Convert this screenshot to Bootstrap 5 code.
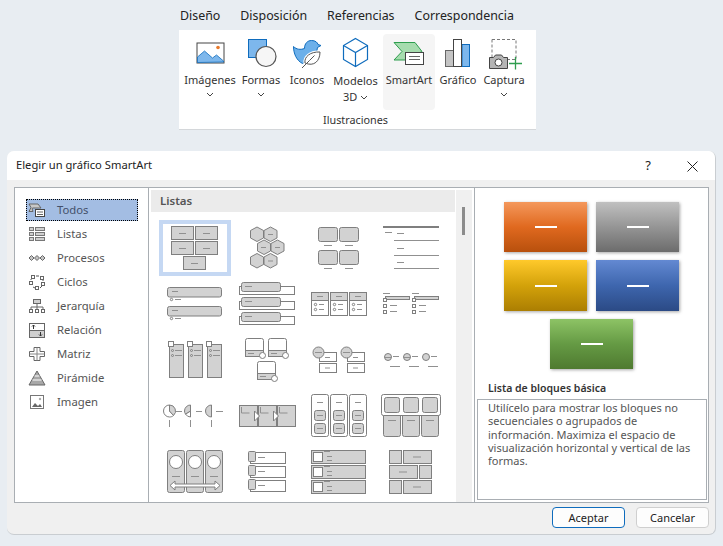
<!doctype html>
<html lang="es">
<head>
<meta charset="utf-8">
<title>Elegir un gráfico SmartArt</title>
<link href="https://cdn.jsdelivr.net/npm/bootstrap@5.3.0/dist/css/bootstrap.min.css" rel="stylesheet">
<style>
html,body{height:100%}
body{background:#e8edf2;font-family:"Noto Sans","Open Sans","Liberation Sans",sans-serif;font-size:12px;color:#262626;overflow:hidden}
.stage{width:723px;height:546px;overflow:hidden}
.rtabs{height:30px;padding-left:180px;gap:20px;font-size:12.4px;line-height:31px;color:#222}
.rpanel{margin-left:179px;width:357px;height:100px;background:#fff;border-bottom:1px solid #d4d7da;padding:4px 0 0 4px}
.rrow{gap:1px}
.rbtn{height:76px;font-size:11px;line-height:16px;color:#333;border-radius:4px}
.rbtn svg{display:block;margin:2px auto 0;flex:none}
.rlab{white-space:nowrap}
.rl1{margin-top:1px}
.rbtn svg.chev{display:block;margin:4px auto 0}
.rbtn svg.chevi{display:inline;margin:0 0 1px}
.w54{width:54px}.w46{width:46px}.w44{width:44px}.w51{width:51px}.w52{width:52px;background:#f5f5f5;margin-left:1px}
.rgroup{font-size:10.8px;color:#333;line-height:14px;margin-top:3px;padding-right:8px}
.dlg{margin:21px 0 0 7px;width:709px;height:384px;background:#f0f0f0;border-radius:7px;overflow:hidden;border-right:1px solid #c9cdd1;border-bottom:1px solid #c9cdd1}
.dtitle{height:29px;background:#fff;padding:0 1px 0 9px;font-size:11.2px;line-height:28px;color:#222}
.dctl{width:44px;text-align:center;font-size:13px}
.dbody{margin:7px 0 0 7px;width:695px;height:316px;background:#fff;border:1px solid #a9aeb3}
.lpane{width:134px;padding:11px 0 0 11px;border-right:1px solid #a9aeb3}
.litem{height:24px;width:112px;padding-left:2px;gap:11px;font-size:11.3px;color:#555;line-height:22px}
.litem svg{flex:none}
.lsel{background:#a3bde3;border:1px dotted #000;padding-left:1px;height:22px;margin-bottom:1px;color:#44506a}
.mpane{width:326px;height:314px;border-right:1px solid #a9aeb3;overflow:hidden}
.mlist{width:307px;height:314px;padding:2px 0 0 2px;overflow:hidden}
.mhead{height:22px;background:#ebebeb;width:304px;padding-left:9px;font-weight:600;font-size:11.5px;line-height:21px;color:#555}
.tgrid{grid-template-columns:repeat(4,72px);grid-auto-rows:56px;margin:8px 0 0 8px}
.tcell{width:72px;height:56px;display:block}
.th rect,.th circle,.th path,.th polygon{fill:#d2d2d2;stroke:#7f7f7f;stroke-width:1}
.th .w{fill:#fff}.th .n{fill:none}.th .k{stroke-width:2}.th .m{fill:none;stroke:#909090}
.th .sel{fill:#fff;stroke:#c5d8f3;stroke-width:4}
.sbar{width:16px;height:312px;margin-top:2px;background:#f0f0f0;padding:17px 0 0 6px}
.sthumb{width:3px;height:28px;background:#8c8c8c}
.rpane{width:233px;padding:14px 0 0 2px}
.swrow{gap:9px;padding-left:27px;margin-bottom:8px}
.sw{width:83px;height:50px;box-shadow:1px 1px 3px rgba(0,0,0,.35)}
.swy{height:51px}
.sw i{display:block;width:22px;height:2px;background:#fff}
.sor{background:linear-gradient(#f4985c,#e0691f 50%,#b8500d)}
.sgr{background:linear-gradient(#c0c0c0,#959595 50%,#6c6c6c)}
.sye{background:linear-gradient(#ffc92b,#d3a20a 50%,#ab7e02)}
.sbl{background:linear-gradient(#6389d2,#3e66ae 50%,#2b4a85)}
.sgn{background:linear-gradient(#8dc365,#659a44 50%,#4f7a30)}
.swc{padding-left:73px}
.ptitle{font-weight:600;font-size:10.5px;line-height:14px;color:#333;margin:12px 0 4px 11px}
.pdesc{width:230px;height:101px;border:1px solid #a9aeb3;padding:1px 10px;font-size:11px;line-height:13.3px;color:#555}
.dfoot{margin-top:4px;padding-right:6px;gap:11px}
.dbtn{width:73px;height:21px;padding:0;font-size:11px;line-height:19px;color:#222;background:#fdfdfd;border:1px solid #cfcfcf;border-radius:4px}
.dbtn.pri{border:1.5px solid #0f6cbd}
</style>
</head>
<body>
<div class="stage">
 <div class="rtabs d-flex"><span>Diseño</span><span>Disposición</span><span>Referencias</span><span>Correspondencia</span></div>
 <div class="rpanel">
  <div class="d-flex rrow">
   <div class="rbtn w54 text-center">
    <svg width="40" height="36" viewBox="0 0 40 36"><rect x="7" y="7" width="27" height="20" fill="#fff" stroke="#444"/><path d="M7.500 26.500V21l7-6 8 7 4-3 7 6v1z" fill="#7db7ec" stroke="#0f6cbd" stroke-width=".8"/><circle cx="28" cy="11.500" r="1.800" fill="#e8792b"/></svg>
    <div class="rlab">Imágenes</div>
    <svg class="chev" width="8" height="5" viewBox="0 0 8 5"><path d="M1 1l3 3 3-3" fill="none" stroke="#444"/></svg>
   </div>
   <div class="rbtn w46 text-center">
    <svg width="40" height="36" viewBox="0 0 40 36"><rect x="7.500" y="3.500" width="18" height="18" fill="#7db7ec" stroke="#0f6cbd"/><circle cx="25" cy="20.500" r="10" fill="#f6f6f6" stroke="#555" stroke-width="1.200"/></svg>
    <div class="rlab">Formas</div>
    <svg class="chev" width="8" height="5" viewBox="0 0 8 5"><path d="M1 1l3 3 3-3" fill="none" stroke="#444"/></svg>
   </div>
   <div class="rbtn w44 text-center">
    <svg width="40" height="36" viewBox="0 0 40 36"><path d="M6.500 10.500c3 3 7 3.500 11 2 0-5 3-8 7-8s6 2 6.500 4l3 1-3.500 2c-.5 4-2 7-4 10l-11 6c-6-3-9-10-9-17z" fill="#6cb0ea" stroke="#0f6cbd"/><path d="M14 32.500l8-8" stroke="#fff" stroke-width="3"/><path d="M18 27c-1-6 5-11.500 15-11 0 9-6 15-15 11z" fill="#fff" stroke="#fff" stroke-width="3"/><path d="M15 32l7.500-7.500M18 27c-1-6 5-11.500 15-11 0 9-6 15-15 11zM22.500 24.500l5-5" fill="#fff" stroke="#555"/></svg>
    <div class="rlab">Iconos</div>
   </div>
   <div class="rbtn w51 text-center">
    <svg width="40" height="36" viewBox="0 0 40 36"><path d="M19.500 2.500l12 7v14l-12 7-12-7v-14z" fill="#fff" stroke="#0f6cbd" stroke-width="1.200"/><path d="M7.500 9.500l12 7 12-7M19.500 16.500v14" fill="none" stroke="#0f6cbd" stroke-width="1.200"/></svg>
    <div class="rlab rl1">Modelos</div>
    <div>3D <svg class="chevi" width="8" height="5" viewBox="0 0 8 5"><path d="M1 1l3 3 3-3" fill="none" stroke="#444"/></svg></div>
   </div>
   <div class="rbtn w52 text-center">
    <svg width="40" height="36" viewBox="0 0 40 36"><path d="M5 6.500h21l7 9-17 8.500H5l8-8.500z" fill="#a6dcae" stroke="#2f9e4f"/><rect x="16.500" y="16.500" width="18" height="12" fill="#fff" stroke="#444"/><path d="M20 20.500h11M20 23.500h11" stroke="#666"/></svg>
    <div class="rlab">SmartArt</div>
   </div>
   <div class="rbtn w44 text-center">
    <svg width="40" height="36" viewBox="0 0 40 36"><rect x="7.500" y="14.500" width="8" height="16" fill="#c4c4c4" stroke="#666"/><rect x="24" y="8.500" width="7.500" height="22" fill="#7db7ec" stroke="#0f6cbd"/><rect x="15.500" y="3.500" width="8" height="27" fill="#fff" stroke="#444"/></svg>
    <div class="rlab">Gráfico</div>
   </div>
   <div class="rbtn w46 text-center">
    <svg width="40" height="36" viewBox="0 0 40 36"><rect x="8" y="3.500" width="24" height="20" fill="none" stroke="#777" stroke-dasharray="3 2"/><path d="M5.500 21.500h4l2-2.500h6l2 2.500h4v11h-18z" fill="#b5b5b5" stroke="#444"/><circle cx="14.500" cy="26.500" r="3.500" fill="#fff" stroke="#444"/><path d="M31.500 21v12.500M25 27.500h13" stroke="#2f9e4f" stroke-width="1.300"/></svg>
    <div class="rlab">Captura</div>
    <svg class="chev" width="8" height="5" viewBox="0 0 8 5"><path d="M1 1l3 3 3-3" fill="none" stroke="#444"/></svg>
   </div>
  </div>
  <div class="rgroup text-center">Ilustraciones</div>
 </div>

 <div class="dlg">
  <div class="dtitle d-flex justify-content-between"><span>Elegir un gráfico SmartArt</span>
   <span class="d-flex"><span class="dctl">?</span><span class="dctl"><svg width="11" height="11" viewBox="0 0 11 11"><path d="M.5.5l10 10M10.500.5l-10 10" stroke="#222"/></svg></span></span></div>
  <div class="dbody d-flex">
   <div class="lpane">
    <div class="litem lsel d-flex align-items-center"><svg width="18" height="16" viewBox="0 0 18 16"><path d="M1 2h9l3 4H5l-1 .500 1 3H1l2-4z" fill="#c8c8c8" stroke="#666"/><rect x="7.500" y="7.500" width="9" height="7" fill="#fff" stroke="#444"/><path d="M9 10h6M9 12.500h6" stroke="#666"/></svg><span>Todos</span></div>
    <div class="litem d-flex align-items-center"><svg width="18" height="16" viewBox="0 0 18 16"><g fill="#cfcfcf" stroke="#777"><rect x="1.500" y="1.500" width="4" height="3"/><rect x="7.500" y="1.500" width="9" height="3"/><rect x="1.500" y="6.500" width="4" height="3"/><rect x="7.500" y="6.500" width="9" height="3"/><rect x="1.500" y="11.500" width="4" height="3"/><rect x="7.500" y="11.500" width="9" height="3"/></g></svg><span>Listas</span></div>
    <div class="litem d-flex align-items-center"><svg width="18" height="16" viewBox="0 0 18 16"><g fill="#c4c4c4" stroke="#666"><path d="M1 8l2.500-2.500L6 8l-2.500 2.500zM6.500 8L9 5.500 11.500 8 9 10.500zM12 8l2.500-2.500L17 8l-2.500 2.500z"/></g></svg><span>Procesos</span></div>
    <div class="litem d-flex align-items-center"><svg width="18" height="16" viewBox="0 0 18 16"><g fill="#fff" stroke="#666"><rect x="3.500" y="1.500" width="3" height="3"/><rect x="12.500" y="2.500" width="3" height="3"/><rect x="1.500" y="7.500" width="3" height="3"/><rect x="13.500" y="8.500" width="3" height="3"/><rect x="7.500" y="12.500" width="3" height="3"/></g><path d="M8 2h3M3 6V5M15 7V6M5 13l2 1M12 14l2-2" stroke="#555"/></svg><span>Ciclos</span></div>
    <div class="litem d-flex align-items-center"><svg width="18" height="16" viewBox="0 0 18 16"><rect x="5.500" y="1.500" width="7" height="4" fill="#cfcfcf" stroke="#666"/><path d="M9 6v3M3 12V9h12v3M9 9v3" fill="none" stroke="#666"/><g fill="#fff" stroke="#666"><rect x="1.500" y="11.500" width="3" height="3"/><rect x="7.500" y="11.500" width="3" height="3"/><rect x="13.500" y="11.500" width="3" height="3"/></g></svg><span>Jerarquía</span></div>
    <div class="litem d-flex align-items-center"><svg width="18" height="16" viewBox="0 0 18 16"><rect x="1.500" y="1.500" width="15" height="14" fill="#fff" stroke="#666"/><rect x="1.500" y="8.500" width="15" height="7" fill="#cfcfcf" stroke="#666"/><path d="M5.500 7V3M4 4.500l1.500-1.500L7 4.500M12.500 10v4M11 12.500l1.500 1.500 1.500-1.500" fill="none" stroke="#333"/></svg><span>Relación</span></div>
    <div class="litem d-flex align-items-center"><svg width="18" height="16" viewBox="0 0 18 16"><path d="M6 1.500h6v4h4.500v5H12v4H6v-4H1.500v-5H6z" fill="#fff" stroke="#666" stroke-linejoin="round"/><path d="M1.500 8h15M9 1.500v13" stroke="#888"/></svg><span>Matriz</span></div>
    <div class="litem d-flex align-items-center"><svg width="18" height="16" viewBox="0 0 18 16"><path d="M9 1l8 14H1z" fill="#a8a8a8" stroke="#666"/><path d="M6.500 6h5M4.500 10h9" stroke="#fff"/></svg><span>Pirámide</span></div>
    <div class="litem d-flex align-items-center"><svg width="18" height="16" viewBox="0 0 18 16"><rect x="2.500" y="1.500" width="13" height="13" fill="#fff" stroke="#777"/><path d="M4 13l3-4 3 3 2-2 2 3z" fill="#666"/><circle cx="12" cy="5" r="1.200" fill="#aaa"/></svg><span>Imagen</span></div>
   </div>

   <div class="mpane d-flex">
    <div class="mlist">
     <div class="mhead">Listas</div>
     <div class="tgrid d-grid">
      <!-- fila 1 -->
      <svg class="tcell th" viewBox="0 0 72 56"><rect class="sel" x="2" y="2" width="68" height="52"/><rect x="12.500" y="6.500" width="22" height="13"/><rect x="36.500" y="6.500" width="22" height="13"/><rect x="12.500" y="21.500" width="22" height="13"/><rect x="36.500" y="21.500" width="22" height="13"/><rect x="24.500" y="36.500" width="22" height="13"/><path class="m" d="M20 13.500h7M44 13.500h7M20 28.500h7M44 28.500h7M32 43.500h7"/></svg>
      <svg class="tcell th" viewBox="0 0 72 56"><polygon points="26,7 32.500,10.500 32.500,18 26,21.500 19.500,18 19.500,10.500"/><polygon points="39.500,7 46,10.500 46,18 39.500,21.500 33,18 33,10.500"/><polygon points="33,20 39.500,23.500 39.500,31 33,34.500 26.500,31 26.500,23.500"/><polygon points="46.500,20 53,23.500 53,31 46.500,34.500 40,31 40,23.500"/><polygon points="26,33.500 32.500,37 32.500,44.500 26,48 19.500,44.500 19.500,37"/><polygon points="39.500,33.500 46,37 46,44.500 39.500,48 33,44.500 33,37"/><path class="m" d="M37 14.500h5M30 27.500h5M44 27.500h5M37 41h5"/></svg>
      <svg class="tcell th" viewBox="0 0 72 56"><rect x="15.500" y="7.500" width="19" height="14" rx="2"/><rect x="36.500" y="7.500" width="19" height="14" rx="2"/><rect x="15.500" y="30.500" width="19" height="14" rx="2"/><rect x="36.500" y="30.500" width="19" height="14" rx="2"/><path class="m" d="M21 25.500h8M42 25.500h8M21 48.500h8M42 48.500h8"/></svg>
      <svg class="tcell th" viewBox="0 0 72 56"><path class="n k" d="M8 7h56"/><path class="m" d="M10 12.500h7M22 13.500h7M19 20.500h45M22 28.500h7M19 35.500h45M22 42.500h7M19 48.500h45"/></svg>
      <!-- fila 2 -->
      <svg class="tcell th" viewBox="0 0 72 56"><rect x="8.500" y="11.500" width="54" height="9.500" rx="2"/><rect x="8.500" y="30.500" width="54" height="9.500" rx="2"/><circle cx="12.500" cy="23.500" r="1.200" class="w"/><circle cx="12.500" cy="42.500" r="1.200" class="w"/><path class="m" d="M13 15.500h6M16 23.500h6M13 34.500h6M16 42.500h6"/></svg>
      <svg class="tcell th" viewBox="0 0 72 56"><rect class="w" x="8.500" y="10.500" width="55" height="8"/><rect x="10.500" y="6.500" width="39" height="9" rx="2"/><rect class="w" x="8.500" y="25.500" width="55" height="8"/><rect x="10.500" y="21.500" width="39" height="9" rx="2"/><rect class="w" x="8.500" y="40.500" width="55" height="8"/><rect x="10.500" y="36.500" width="39" height="9" rx="2"/><path class="m" d="M14 10.500h7M14 25.500h7M14 40.500h7"/></svg>
      <svg class="tcell th" viewBox="0 0 72 56"><rect class="w" x="8.500" y="16.500" width="17" height="23"/><rect class="w" x="27.500" y="16.500" width="17" height="23"/><rect class="w" x="46.500" y="16.500" width="17" height="23"/><rect x="8.500" y="16.500" width="17" height="8"/><rect x="27.500" y="16.500" width="17" height="8"/><rect x="46.500" y="16.500" width="17" height="8"/><path class="m" d="M14 20.500h6M33 20.500h6M52 20.500h6M16 28.500h5M16 33.500h5M35 28.500h5M35 33.500h5M54 28.500h5M54 33.500h5"/><circle class="w" cx="12.500" cy="28.500" r="1.200"/><circle class="w" cx="12.500" cy="33.500" r="1.200"/><circle class="w" cx="31.500" cy="28.500" r="1.200"/><circle class="w" cx="31.500" cy="33.500" r="1.200"/><circle class="w" cx="50.500" cy="28.500" r="1.200"/><circle class="w" cx="50.500" cy="33.500" r="1.200"/></svg>
      <svg class="tcell th" viewBox="0 0 72 56"><rect x="10.500" y="20.500" width="24" height="3"/><rect x="39.500" y="20.500" width="24" height="3"/><path class="m" d="M8 17.500h7M37 17.500h7M15 29.500h7M15 35.500h7M44 29.500h7M44 35.500h7"/><rect class="w" x="8.500" y="22.500" width="3" height="3"/><rect class="w" x="8.500" y="28.500" width="3" height="3"/><rect class="w" x="8.500" y="34.500" width="3" height="3"/><rect class="w" x="37.500" y="22.500" width="3" height="3"/><rect class="w" x="37.500" y="28.500" width="3" height="3"/><rect class="w" x="37.500" y="34.500" width="3" height="3"/></svg>
      <!-- fila 3 -->
      <svg class="tcell th" viewBox="0 0 72 56"><rect x="10.500" y="12.500" width="14" height="33"/><rect x="29.500" y="12.500" width="14" height="33"/><rect x="48.500" y="12.500" width="14" height="33"/><rect class="w" x="9.500" y="9.500" width="5" height="5"/><rect class="w" x="28.500" y="9.500" width="5" height="5"/><rect class="w" x="47.500" y="9.500" width="5" height="5"/><path class="m" d="M16 18.500h7M16 23.500h7M35 18.500h7M35 23.500h7M54 18.500h7M54 23.500h7"/><circle cx="13.500" cy="18.500" r="1"/><circle cx="13.500" cy="23.500" r="1"/><circle cx="32.500" cy="18.500" r="1"/><circle cx="32.500" cy="23.500" r="1"/><circle cx="51.500" cy="18.500" r="1"/><circle cx="51.500" cy="23.500" r="1"/></svg>
      <svg class="tcell th" viewBox="0 0 72 56"><rect class="w" x="14.500" y="6.500" width="18" height="18" rx="2"/><rect x="14.500" y="18.500" width="18" height="6"/><rect class="w" x="37.500" y="6.500" width="18" height="18" rx="2"/><rect x="37.500" y="18.500" width="18" height="6"/><rect class="w" x="26.500" y="29.500" width="18" height="18" rx="2"/><rect x="26.500" y="41.500" width="18" height="6"/><path class="m" d="M17 21.500h6M40 21.500h6M29 44.500h6"/><circle class="w" cx="31.500" cy="23.500" r="3"/><circle class="w" cx="54.500" cy="23.500" r="3"/><circle class="w" cx="43.500" cy="46.500" r="3"/></svg>
      <svg class="tcell th" viewBox="0 0 72 56"><rect class="w" x="16.500" y="20.500" width="17" height="9"/><rect class="w" x="16.500" y="31.500" width="17" height="9"/><rect class="w" x="44.500" y="20.500" width="17" height="9"/><rect class="w" x="44.500" y="31.500" width="17" height="9"/><circle cx="15.500" cy="20.500" r="5.500"/><circle cx="43.500" cy="20.500" r="5.500"/><path class="m" d="M12 20.500h7M40 20.500h7M22 25.500h5M22 36h5M50 25.500h5M50 36h5"/></svg>
      <svg class="tcell th" viewBox="0 0 72 56"><circle cx="13" cy="25" r="3.500"/><circle cx="32" cy="25" r="3.500"/><circle cx="51" cy="25" r="3.500"/><path class="m" d="M10 25.500h6M29 25.500h6M18 24.500h6M37 24.500h6M56 24.500h6M15 34.500h10M34 34.500h10M53 34.500h10"/></svg>
      <!-- fila 4 -->
      <svg class="tcell th" viewBox="0 0 72 56"><path class="w" d="M10.500 17a6 6 0 0 0 0 12c1.500 0 3-.5 4-1.500l-4-4.500z"/><path d="M10.500 17a6 6 0 0 1 4 10.500l-4-4.500z"/><path class="w" d="M31.500 17v12a6 6 0 0 1-5-3l5-3z"/><path d="M31.500 17a6 6 0 0 0-6 6c0 1 .2 2 1 3l5-3z"/><path d="M52.500 17a6 6 0 0 0 0 12z"/><path class="m" d="M17 23.500h6M37 23.500h6M57 23.500h7M10.500 32v7M31.500 32v7M52.500 32v7"/></svg>
      <svg class="tcell th" viewBox="0 0 72 56"><rect x="8.500" y="17.500" width="18" height="21"/><rect x="27.500" y="17.500" width="18" height="21"/><rect x="46.500" y="17.500" width="18" height="21"/><path class="w" d="M23.500 23l5 5-5 5zM42.500 23l5 5-5 5z"/><path class="m" d="M10.500 19v6h8M29.500 19v6h8M48.500 19v6h8"/></svg>
      <svg class="tcell th" viewBox="0 0 72 56"><rect class="w" x="8.500" y="6.500" width="17" height="42" rx="2"/><rect class="w" x="27.500" y="6.500" width="17" height="42" rx="2"/><rect class="w" x="46.500" y="6.500" width="17" height="42" rx="2"/><rect x="11.500" y="22.500" width="11" height="10" rx="2"/><rect x="11.500" y="35.500" width="11" height="10" rx="2"/><rect x="30.500" y="22.500" width="11" height="10" rx="2"/><rect x="30.500" y="35.500" width="11" height="10" rx="2"/><rect x="49.500" y="22.500" width="11" height="10" rx="2"/><rect x="49.500" y="35.500" width="11" height="10" rx="2"/><path class="m" d="M14 14.500h6M33 14.500h6M52 14.500h6M14 27.500h6M14 40.500h6M33 27.500h6M33 40.500h6M52 27.500h6M52 40.500h6"/></svg>
      <svg class="tcell th" viewBox="0 0 72 56"><rect x="8.500" y="24.500" width="17" height="24" rx="2"/><rect x="27.500" y="24.500" width="17" height="24" rx="2"/><rect x="46.500" y="24.500" width="17" height="24" rx="2"/><rect class="w" x="6.500" y="6.500" width="59" height="21" rx="2"/><rect x="9.500" y="9.500" width="15" height="15" rx="2"/><rect x="28.500" y="9.500" width="15" height="15" rx="2"/><rect x="47.500" y="9.500" width="15" height="15" rx="2"/><path class="m" d="M13 32.500h8M32 32.500h8M51 32.500h8"/></svg>
      <!-- fila 5 -->
      <svg class="tcell th" viewBox="0 0 72 56"><rect x="8.500" y="6.500" width="17" height="42" rx="2"/><rect x="27.500" y="6.500" width="17" height="42" rx="2"/><rect x="46.500" y="6.500" width="17" height="42" rx="2"/><circle class="w" cx="17" cy="18" r="6.500"/><circle class="w" cx="36" cy="18" r="6.500"/><circle class="w" cx="55" cy="18" r="6.500"/><path class="m" d="M13 32.500h8M32 32.500h8M51 32.500h8"/><path class="w" d="M11 41.500l5-4.500v3h40v-3l5 4.500-5 4.500v-3H16v3z"/></svg>
      <svg class="tcell th" viewBox="0 0 72 56"><rect class="w" x="19.500" y="8.500" width="35" height="11"/><rect class="w" x="19.500" y="22.500" width="35" height="11"/><rect class="w" x="19.500" y="36.500" width="35" height="11"/><rect x="17.500" y="7.500" width="7" height="10" rx="1"/><rect x="17.500" y="21.500" width="7" height="10" rx="1"/><rect x="17.500" y="35.500" width="7" height="10" rx="1"/><path class="m" d="M27 13.500h7M27 27.500h7M27 41.500h7"/></svg>
      <svg class="tcell th" viewBox="0 0 72 56"><rect x="8.500" y="6.500" width="54" height="13"/><rect x="8.500" y="21.500" width="54" height="13"/><rect x="8.500" y="36.500" width="54" height="13"/><rect class="w" x="10.500" y="8.500" width="9" height="9"/><rect class="w" x="10.500" y="23.500" width="9" height="9"/><rect class="w" x="10.500" y="38.500" width="9" height="9"/><path class="m" d="M21 7.500h6M24 12.500h5M24 16.500h5M21 22.500h6M24 27.500h5M24 31.500h5M21 37.500h6M24 42.500h5M24 46.500h5"/></svg>
      <svg class="tcell th" viewBox="0 0 72 56"><rect x="14.500" y="6.500" width="12" height="13"/><rect x="28.500" y="6.500" width="28" height="13"/><rect x="14.500" y="21.500" width="28" height="13"/><rect x="44.500" y="21.500" width="12" height="13"/><rect x="14.500" y="36.500" width="12" height="13"/><rect x="28.500" y="36.500" width="28" height="13"/><path class="m" d="M38 13h8M24 28h8M38 43h8"/></svg>
     </div>
    </div>
    <div class="sbar"><div class="sthumb"></div></div>
   </div>

   <div class="rpane">
    <div class="swrow d-flex"><div class="sw sor d-flex align-items-center justify-content-center"><i></i></div><div class="sw sgr d-flex align-items-center justify-content-center"><i></i></div></div>
    <div class="swrow d-flex"><div class="sw swy sye d-flex align-items-center justify-content-center"><i></i></div><div class="sw swy sbl d-flex align-items-center justify-content-center"><i></i></div></div>
    <div class="swc"><div class="sw sgn d-flex align-items-center justify-content-center"><i></i></div></div>
    <div class="ptitle">Lista de bloques básica</div>
    <div class="pdesc">Utilícelo para mostrar los bloques no secuenciales o agrupados de información. Maximiza el espacio de visualización horizontal y vertical de las formas.</div>
   </div>
  </div>
  <div class="dfoot d-flex justify-content-end">
   <button type="button" class="btn dbtn pri">Aceptar</button>
   <button type="button" class="btn dbtn">Cancelar</button>
  </div>
 </div>
</div>
</body>
</html>
